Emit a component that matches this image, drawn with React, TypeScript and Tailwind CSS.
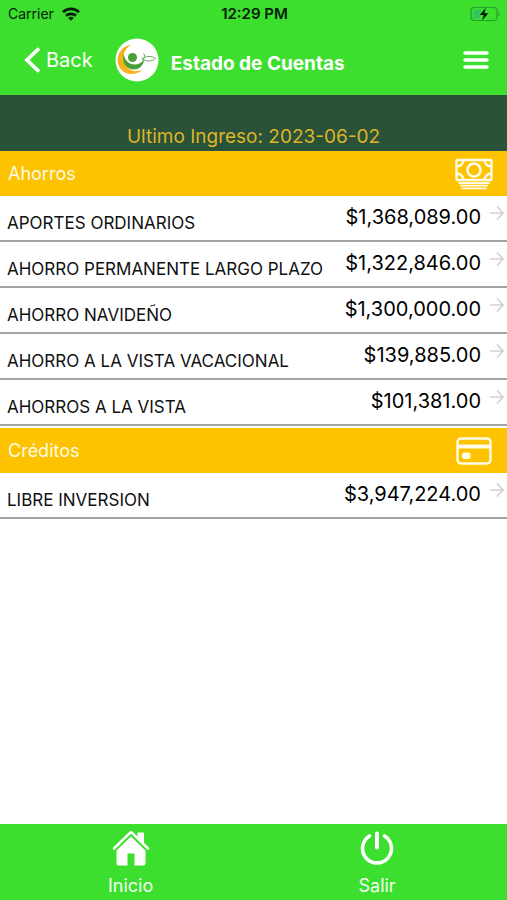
import React from 'react';

interface Account {
  name: string;
  balance: string;
}

const savings: Account[] = [
  { name: 'APORTES ORDINARIOS', balance: '$1,368,089.00' },
  { name: 'AHORRO PERMANENTE LARGO PLAZO', balance: '$1,322,846.00' },
  { name: 'AHORRO NAVIDEÑO', balance: '$1,300,000.00' },
  { name: 'AHORRO A LA VISTA VACACIONAL', balance: '$139,885.00' },
  { name: 'AHORROS A LA VISTA', balance: '$101,381.00' },
];

const credits: Account[] = [{ name: 'LIBRE INVERSION', balance: '$3,947,224.00' }];

const WifiIcon = () => (
  <svg viewBox="0 0 18 14" className="w-[18px] h-[14px]" fill="none" stroke="#06200a" strokeWidth="2.8">
    <path d="M1 5.2a11.4 11.4 0 0 1 16 0" />
    <path d="M4 8.8a7.2 7.2 0 0 1 10 0" />
    <path d="M9 13.8 6.2 11a4 4 0 0 1 5.6 0z" fill="#06200a" stroke="none" />
  </svg>
);

const BatteryIcon = () => (
  <svg viewBox="0 0 31 16" className="w-[31px] h-4">
    <rect x="1" y="1.5" width="26" height="13" rx="3.5" fill="none" stroke="#27a02a" strokeWidth="1.2" />
    <path d="M4.5 3.5h7l-2 9h-5A1.5 1.5 0 0 1 3 11V5a1.5 1.5 0 0 1 1.5-1.5z" fill="#36c463" />
    <path d="M28.5 5.5c1.6.6 1.6 4.4 0 5z" fill="#27a02a" />
    <path d="M15.8 1.8 9.8 9h3.8L12 14.500l6.300-7.300h-3.900z" fill="#041503" />
  </svg>
);

const Logo = () => (
  <svg viewBox="0 0 44 44" className="w-11 h-11">
    <circle cx="22" cy="22" r="21.5" fill="#fff" />
    <path d="M16 7C6 8 .5 18 3.500 27c3.500 9.500 15 12 24 5-7.500 2.500-14 .5-17-5C6.500 19.500 8.500 11.500 16 7z" fill="#f9b21d" />
    <path d="M8.500 16C6.500 24.500 11 31.500 19 31.500c6 0 9.500-4.500 10.500-11-2.500 4-5.500 6-10 6-5.500 0-9.500-4-11-10.500z" fill="#4c9f38" />
    <circle cx="17.5" cy="19.5" r="4.5" fill="#4c9f38" />
    <path d="M27 22c2-2.500 4-3.500 7-3.500 3-.1 5 .7 6.500 2-2 2-4.500 2.700-7.500 2.500-3-.2-4.600-1.500-6-3.500M28.500 15.500c1.500 1.500 1.500 3.500-.5 5" fill="none" stroke="#6dab60" strokeWidth="1" />
  </svg>
);

const MoneyIcon = () => (
  <svg viewBox="0 0 38 32" className="w-[38px] h-8" fill="none" stroke="#fffbe6" strokeWidth="2.4">
    <rect x="1.5" y="2" width="35" height="20" rx="1" />
    <circle cx="19" cy="12" r="6.5" strokeWidth="2.6" />
    <path d="M2 8.5c3.5-.5 6-3 6.500-6M36 8.500c-3.500-.5-6-3-6.500-6M2 15.500c3.500.5 6 3 6.500 6M36 15.500c-3.500.5-6 3-6.500 6" />
    <path d="M3.500 25h31M5 27.700h28M6.500 30.400h25" strokeWidth="1.8" />
  </svg>
);

const CardIcon = () => (
  <svg viewBox="0 0 38 32" className="w-[38px] h-8">
    <rect x="2.5" y="3.5" width="33" height="25" rx="3.5" fill="none" stroke="#fffbe6" strokeWidth="2.4" />
    <path d="M2.500 9.500h33v4h-33z" fill="#fffbe6" />
    <rect x="7" y="17.5" width="8.5" height="6.5" rx="2" fill="#fffbe6" />
  </svg>
);

const ArrowIcon = () => (
  <svg viewBox="0 0 16 16" className="w-4 h-4" fill="none" stroke="#d4cfd2" strokeWidth="1.7">
    <path d="M1 8h12.500M8 1.500 14 8l-6 6.500" />
  </svg>
);

const HomeIcon = () => (
  <svg viewBox="0 0 40 40" className="w-10 h-10" fill="#fff">
    <path d="M3 20.500 19 4.900q1-.9 2 0l16 15.600" fill="none" stroke="#fff" strokeWidth="2.6" strokeLinecap="round" />
    <path d="M26.500 4.500H32a1 1 0 0 1 1 1V16l-6.500-6z" />
    <path d="M20 8.500 5.500 22.500v13a2 2 0 0 0 2 2h9v-12h7v12h9a2 2 0 0 0 2-2v-13z" />
  </svg>
);

const PowerIcon = () => (
  <svg viewBox="0 0 40 40" className="w-10 h-10" fill="none" stroke="#fff" strokeLinecap="round">
    <path d="M12.500 8a14.500 14.500 0 1 0 15 0" strokeWidth="3.6" />
    <path d="M20 5.500v14" strokeWidth="4" />
  </svg>
);

interface SectionProps {
  title: string;
  icon: React.ReactNode;
  accounts: Account[];
}

const Section: React.FC<SectionProps> = ({ title, icon, accounts }) => (
  <section>
    <div className="flex items-center justify-between h-[45px] pl-2 pr-3.5 bg-[#fdc300]">
      <h2 className="pt-px text-lg text-[#fffbe6]">{title}</h2>
      {icon}
    </div>
    <ul className="pb-0.5">
      {accounts.map((account) => (
        <li key={account.name} className="border-b-2 border-[#a3a3a3]">
          <button className="flex justify-between w-full h-11 pl-[7px] pr-0.5 text-left">
            <span className="pt-[15px] text-[17px] leading-6 text-[#111]">{account.name}</span>
            <span className="flex gap-2">
              <span className="pt-[7px] text-xl text-black">{account.balance}</span>
              <span className="pt-[9px]">
                <ArrowIcon />
              </span>
            </span>
          </button>
        </li>
      ))}
    </ul>
  </section>
);

const App: React.FC = () => {
  return (
    <div className="flex flex-col min-h-screen bg-white font-['Inter','Liberation_Sans',sans-serif]">
      <header className="bg-[#3cdf2d]">
        <div className="grid grid-cols-3 items-center h-7 pl-2 pr-1.5 text-sm text-[#06200a]">
          <span className="flex items-center gap-2">
            Carrier <WifiIcon />
          </span>
          <span className="text-center text-[15px] font-semibold">12:29 PM</span>
          <span className="flex justify-end">
            <BatteryIcon />
          </span>
        </div>
        <div className="flex items-center h-[67px] pb-1 pl-6 pr-[18px] text-white">
          <button className="flex items-center gap-1 text-xl">
            <svg viewBox="0 0 18 28" className="w-[18px] h-7" fill="none" stroke="#fff" strokeWidth="3.8">
              <path d="M15 2.500 3 14l12 11.500" />
            </svg>
            Back
          </button>
          <span className="ml-[22px]">
            <Logo />
          </span>
          <h1 className="pt-2.5 pl-3 text-[19px] font-bold">Estado de Cuentas</h1>
          <button aria-label="Menú" className="ml-auto">
            <svg viewBox="0 0 26 20" className="w-[26px] h-5" stroke="#fff" strokeWidth="3.4" strokeLinecap="round">
              <path d="M2 3h22M2 10h22M2 17h22" />
            </svg>
          </button>
        </div>
      </header>

      <p className="h-14 pt-7 text-center text-[19px] leading-7 text-[#dfb527] bg-[#2a5238]">
        Ultimo Ingreso: 2023-06-02
      </p>

      <main className="flex-1">
        <Section title="Ahorros" icon={<MoneyIcon />} accounts={savings} />
        <Section title="Créditos" icon={<CardIcon />} accounts={credits} />
      </main>

      <nav className="flex justify-around h-[76px] pt-1 pl-1.5 pr-2 bg-[#3cdf2d] text-lg text-[#f3fff2]">
        <a href="#inicio" className="flex flex-col items-center gap-1">
          <HomeIcon />
          Inicio
        </a>
        <a href="#salir" className="flex flex-col items-center gap-1">
          <PowerIcon />
          Salir
        </a>
      </nav>
    </div>
  );
};

export default App;
